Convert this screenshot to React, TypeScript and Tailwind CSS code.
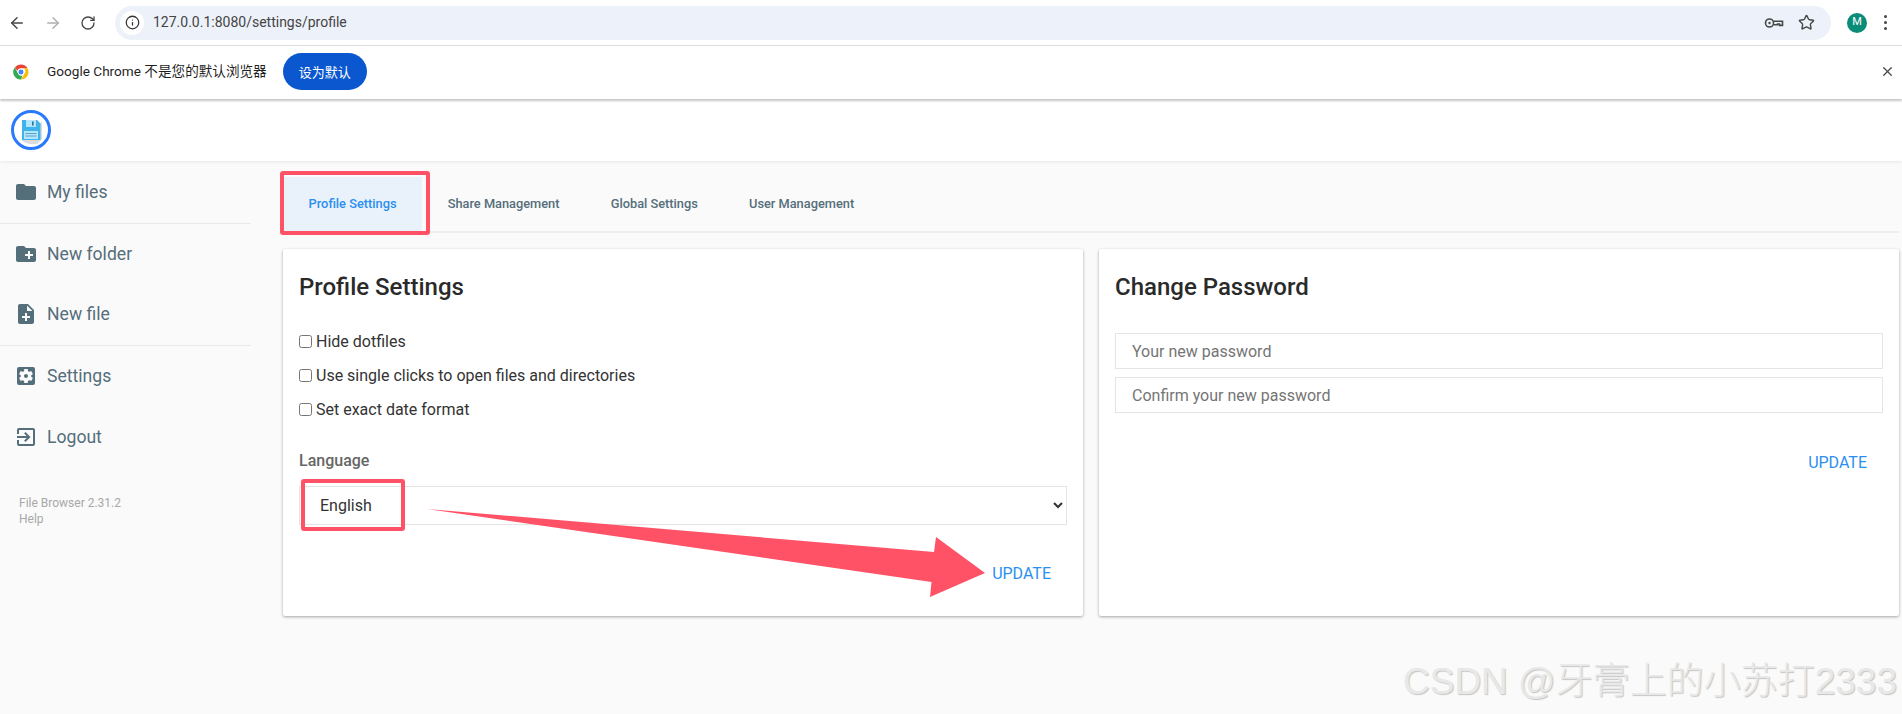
import { useState } from "react";
import { ArrowLeft, ArrowRight, Info, RotateCw, Star, X } from "lucide-react";
import { MdCreateNewFolder, MdExitToApp, MdFolder, MdNoteAdd, MdSettingsApplications } from "react-icons/md";

const font = "font-['Roboto',sans-serif]";

function ChromeLogo() {
  return (
    <svg width="18" height="18" viewBox="0 0 48 48">
      <path d="M24 4a20 20 0 0 1 17.3 10H24a10 10 0 0 0-9.4 6.6L7.6 11.7A20 20 0 0 1 24 4z" fill="#ea4335" />
      <path d="M41.3 14A20 20 0 0 1 24 44l8.7-15A10 10 0 0 0 32 14z" fill="#fbbc04" />
      <path d="M24 44A20 20 0 0 1 7.6 11.7L16 27a10 10 0 0 0 12 6.2z" fill="#34a853" />
      <circle cx="24" cy="24" r="8" fill="#4285f4" stroke="#fff" strokeWidth="2.5" />
    </svg>
  );
}

function KeyIcon() {
  return (
    <svg width="20" height="18" viewBox="0 0 20 18" fill="none" stroke="#474747" strokeWidth="1.6">
      <circle cx="5.5" cy="9" r="4" />
      <circle cx="5.5" cy="9" r="1.2" fill="#474747" stroke="none" />
      <path d="M9.5 7.2H18.5V11.4H15.5V10H13.5V10.8H9.5" />
    </svg>
  );
}

function Logo() {
  return (
    <svg width="40" height="40" viewBox="0 0 40 40">
      <circle cx="20" cy="20" r="18.5" fill="#fff" stroke="#2979ff" strokeWidth="3" />
      <path d="M31 12L31 29L27 33.5C22 35 15 34 10 30Z" fill="#dcdcdc" />
      <path d="M11 10h15l3.5 3.5V30H11z" fill="#40b4ea" />
      <rect x="15" y="10" width="10" height="7" fill="#b3e5fc" />
      <rect x="21" y="11.5" width="1.6" height="4" fill="#2f6f92" />
      <rect x="13" y="21" width="14" height="8" fill="#b3e5fc" />
      <path d="M14.5 23.5h11M14.5 26h11" stroke="#4a90b8" strokeWidth="0.8" />
    </svg>
  );
}

function BrowserBar() {
  return (
    <div className="flex h-[46px] items-center border-b border-[#dcdcdc] bg-white">
      <ArrowLeft className="ml-[8px] text-[#474747]" size={18} />
      <ArrowRight className="ml-[18px] text-[#b0b0b0]" size={18} />
      <RotateCw className="ml-[18px] text-[#474747]" size={16} />
      <div className="ml-[19px] flex h-[34px] w-[1716px] items-center rounded-full bg-[#edf2fa]">
        <span className="ml-[5px] flex h-[24px] w-[24px] items-center justify-center rounded-full bg-white">
          <Info size={15} className="text-[#333]" />
        </span>
        <span className={`ml-[9px] text-[14px] text-[#444] ${font}`}>127.0.0.1:8080/settings/profile</span>
        <span className="ml-auto flex items-center gap-[14px] pr-[16px]">
          <KeyIcon />
          <Star size={17} className="text-[#474747]" />
        </span>
      </div>
      <span className={`ml-[16px] flex h-[20px] w-[20px] items-center justify-center rounded-full bg-[#0b8c78] text-[11px] text-white ${font}`}>
        M
      </span>
      <span className="ml-[17px] flex flex-col gap-[3px]">
        <i className="h-[3px] w-[3px] rounded-full bg-[#474747]" />
        <i className="h-[3px] w-[3px] rounded-full bg-[#474747]" />
        <i className="h-[3px] w-[3px] rounded-full bg-[#474747]" />
      </span>
    </div>
  );
}

function InfoBar() {
  return (
    <div className="relative z-20 flex h-[53px] items-center bg-white pb-[2px] pl-[12px] pr-[7px] shadow-[0_2px_2px_rgba(0,0,0,0.22)]">
      <ChromeLogo />
      <span className="ml-[17px] text-[13.6px] text-[#1f1f1f] [font-family:'Roboto','Noto_Sans_CJK_SC',sans-serif]">
        Google Chrome 不是您的默认浏览器
      </span>
      <button className="ml-[16px] h-[37px] w-[84px] rounded-full bg-[#0b57d0] text-[13px] text-white [font-family:'Noto_Sans_CJK_SC',sans-serif]">
        设为默认
      </button>
      <X size={15} className="ml-auto text-[#474747]" />
    </div>
  );
}

const sidebarGroups = [
  [{ icon: MdFolder, label: "My files" }],
  [
    { icon: MdCreateNewFolder, label: "New folder" },
    { icon: MdNoteAdd, label: "New file" },
  ],
  [
    { icon: MdSettingsApplications, label: "Settings" },
    { icon: MdExitToApp, label: "Logout" },
  ],
];

function Sidebar() {
  return (
    <aside className={`mt-[1px] w-[251px] shrink-0 ${font}`}>
      {sidebarGroups.map((group, i) => (
        <div key={i} className={i > 0 ? "border-t border-[#e9e9e9]" : ""}>
          {group.map(({ icon: Icon, label }) => (
            <div
              key={label}
              className={`flex items-center pl-[14px] text-[#546e7a] ${i === 2 ? "h-[61px]" : "h-[60.5px]"}`}
            >
              <Icon size={24} />
              <span className="ml-[9px] text-[17.6px]">{label}</span>
            </div>
          ))}
        </div>
      ))}
      <div className="mt-[27px] pl-[19px] text-[12px] leading-[16px] text-[#a8a8a8]">
        <p>File Browser 2.31.2</p>
        <p>Help</p>
      </div>
    </aside>
  );
}

const tabs = ["Profile Settings", "Share Management", "Global Settings", "User Management"];

function Tabs() {
  return (
    <div className="flex h-[72px] border-b-2 border-[#eeeeee] pl-[3px] pt-[16px]">
      {tabs.map((tab, i) => (
        <div
          key={tab}
          className={`flex items-center px-[25.6px] text-[12.8px] font-medium ${
            i === 0 ? "bg-[#e9f1fa] text-[#2b8ff0]" : "text-[#546e7a]"
          }`}
        >
          {tab}
        </div>
      ))}
    </div>
  );
}

function Update() {
  return <button className="text-[16px] leading-[20px] text-[#2b8ff0]">UPDATE</button>;
}

function ProfileCard() {
  const [lang, setLang] = useState("en");
  return (
    <section className="flex h-[367px] flex-col rounded-[2px] bg-white px-[16px] shadow-[0_1px_3px_rgba(0,0,0,0.35)]">
      <h2 className="mt-[22px] text-[24px] font-medium leading-[32px] text-[#2a2a2a]">Profile Settings</h2>
      <div className="mt-[29px] flex flex-col gap-[14px] text-[16px] leading-[20px] text-[#333]">
        {["Hide dotfiles", "Use single clicks to open files and directories", "Set exact date format"].map((label) => (
          <label key={label} className="flex items-center">
            <input type="checkbox" className="m-0 mb-[2px] h-[13px] w-[13px]" />
            <span className="ml-[4px]">{label}</span>
          </label>
        ))}
      </div>
      <p className="mt-[31px] text-[16px] font-medium leading-[20px] text-[#666]">Language</p>
      <select
        value={lang}
        onChange={(e) => setLang(e.target.value)}
        className="mt-[15px] h-[39px] w-[768px] border border-[#e4e4e4] bg-white pl-[16px] text-[16px] text-[#333]"
      >
        <option value="en">English</option>
      </select>
      <div className="mt-[39px] flex justify-end pr-[16px]">
        <Update />
      </div>
    </section>
  );
}

function PasswordCard() {
  return (
    <section className="flex h-[367px] flex-col rounded-[2px] bg-white px-[16px] shadow-[0_1px_3px_rgba(0,0,0,0.35)]">
      <h2 className="mt-[22px] text-[24px] font-medium leading-[32px] text-[#2a2a2a]">Change Password</h2>
      <input
        placeholder="Your new password"
        className="mt-[30px] h-[36px] border border-[#e4e4e4] pl-[16px] text-[16px] placeholder:text-[#757575]"
      />
      <input
        placeholder="Confirm your new password"
        className="mt-[8px] h-[36px] border border-[#e4e4e4] pl-[16px] text-[16px] placeholder:text-[#757575]"
      />
      <div className="mt-[40px] flex justify-end pr-[16px]">
        <Update />
      </div>
    </section>
  );
}

export default function App() {
  return (
    <div className={`relative h-[714px] overflow-hidden bg-[#fafafa] ${font}`}>
      <BrowserBar />
      <InfoBar />
      <header className="relative z-10 flex h-[62px] items-center bg-white pl-[11px] shadow-[0_1px_3px_rgba(0,0,0,0.08)]">
        <Logo />
      </header>
      <div className="flex">
        <Sidebar />
        <main className="ml-[29px] flex-1 pr-[3px]">
          <Tabs />
          <div className="mt-[16px] ml-[3px] grid grid-cols-2 gap-[16px]">
            <ProfileCard />
            <PasswordCard />
          </div>
        </main>
      </div>

      {/* red markup drawn on top of the screenshot */}
      <div className="absolute left-[280px] top-[171px] h-[64px] w-[150px] rounded-[3px] border-[4px] border-[#ff5266]" />
      <div className="absolute left-[301px] top-[479px] h-[52px] w-[104px] rounded-[3px] border-[4px] border-[#ff5266]" />
      <svg className="absolute left-0 top-0" width="1902" height="714">
        <polygon points="427,509 934,552 936,537 985,573 930,597 931.5,582" fill="#ff5266" />
      </svg>
      <span className="absolute left-[1403px] top-[658px] whitespace-nowrap text-[37px] font-light leading-[48px] text-[#e8e8e8] [font-family:'Liberation_Sans','Noto_Sans_CJK_SC',sans-serif] [text-shadow:1px_1px_1px_#c4c4c4]">
        CSDN @牙膏上的小苏打2333
      </span>
    </div>
  );
}
